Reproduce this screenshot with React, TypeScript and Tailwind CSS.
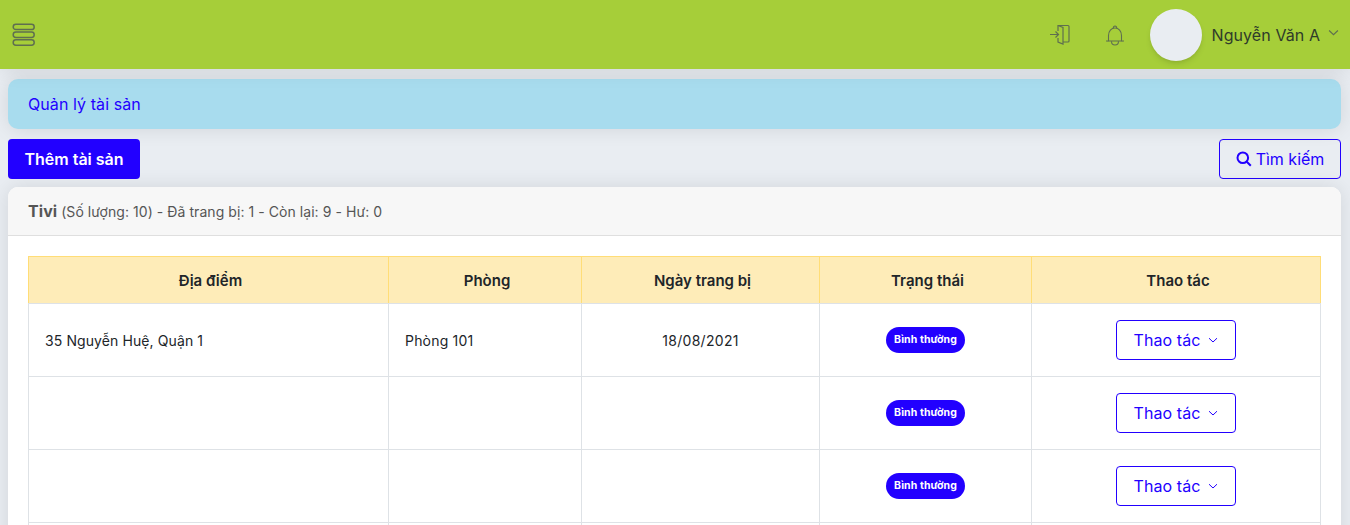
import React from "react";

const F = "[font-family:Inter,'Noto_Sans',sans-serif]";

function Row({ place, room, date }: { place?: string; room?: string; date?: string }) {
  return (
    <tr className="h-[73px]">
      <td className="border border-[#dee2e6] px-4 text-[14px] tracking-[0.1px] text-[#212529]">{place}</td>
      <td className="border border-[#dee2e6] px-4 text-[14px] tracking-[0.2px] text-[#212529]">{room}</td>
      <td className="border border-[#dee2e6] px-4 text-center text-[14px] tracking-[0.3px] text-[#212529]">{date}</td>
      <td className="border border-[#dee2e6] px-4 text-center">
        <span className="relative -top-px inline-flex h-[26px] w-[79px] items-center justify-center rounded-full bg-[#2200ff] text-[10.5px] font-bold tracking-[0.1px] text-white">Bình thường</span>
      </td>
      <td className="border border-[#dee2e6] px-4 text-center">
        <button className="inline-flex h-10 w-[120px] items-center justify-center gap-2 rounded border border-[#2200ff] text-[16px] tracking-[0.08px] text-[#2200ff]">
          Thao tác
          <svg width="10" height="10" viewBox="0 0 10 10" fill="none" stroke="currentColor" strokeWidth="1"><path d="M1 3.200 5 7l4-3.800" /></svg>
        </button>
      </td>
    </tr>
  );
}

export default function App() {
  return (
    <div className={`h-[525px] w-full overflow-hidden bg-[#e9edf2] ${F}`}>
      <header className="relative z-10 flex h-[69px] items-center bg-[#a6ce39] pl-3 pr-[11px] shadow-[0_0_20px_rgba(0,0,0,0.1)]">
        <svg width="24" height="24" viewBox="0 0 24 24" fill="none" stroke="#5f6f4f" strokeWidth="1.500">
          <rect x="1.200" y="1.200" width="21" height="5.400" rx="2.700" />
          <rect x="1.200" y="9" width="21" height="5.400" rx="2.700" />
          <rect x="1.200" y="16.800" width="21" height="5.400" rx="2.700" />
        </svg>
        <div className="ml-auto flex items-center">
          <svg width="24" height="24" viewBox="0 0 24 24" fill="none" stroke="#5f6f4f" strokeWidth="1.200">
            <path d="M2 11.500h8.500M7.500 8.500l3 3-3 3" />
            <path d="M10 8V2.500h10a1 1 0 0 1 1 1V18a1 1 0 0 1-1 1h-5" />
            <path d="M10 15v4l5 2V4.500l-5-2" />
          </svg>
          <svg className="ml-[32px]" width="22" height="22" viewBox="0 0 22 22" fill="none" stroke="#5f6f4f" strokeWidth="1.100">
            <path d="M9.300 4.200C9.300 3 10 2 11 2s1.700 1 1.700 2.200" />
            <path d="M4.500 17v-5.500C4.500 7 7.300 4 11 4s6.500 3 6.500 7.500V17c0 .3 1.500 0 2.500 0H2c1 0 2.500.3 2.500 0Z" />
            <path d="M7.500 17.200c0 2.200 1.500 3.800 3.500 3.800s3.500-1.600 3.500-3.800" />
          </svg>
          <div className="ml-[24px] h-[52px] w-[52px] rounded-full bg-[#e9edf2] shadow-md" />
          <span className="ml-[10px] text-[16px] tracking-[0.08px] text-[#2f3b2a]">Nguyễn Văn A</span>
          <svg className="ml-[8px] mb-1" width="11" height="11" viewBox="0 0 10 10" fill="none" stroke="#5f6f4f" strokeWidth="1"><path d="M1 3.200 5 7l4-3.800" /></svg>
        </div>
      </header>
      <main className="flex flex-col px-2 pt-[10px] pr-[9px]">
        <div className="flex h-[50px] items-center rounded-[10px] bg-[#a8dcee] px-5 text-[16px] tracking-[0.08px] text-[#2200ff] shadow-[0_0_20px_rgba(0,0,0,0.1)]">Quản lý tài sản</div>
        <div className="mt-[10px] flex items-center justify-between">
          <button className="h-10 w-[132px] rounded bg-[#2200ff] text-[16px] font-semibold text-white">Thêm tài sản</button>
          <button className="flex h-10 w-[122px] items-center justify-center gap-1 rounded border border-[#2200ff] text-[16px] text-[#2200ff]">
            <svg width="16" height="16" viewBox="0 0 16 16" fill="none" stroke="currentColor" strokeWidth="2"><circle cx="6.800" cy="6.800" r="5.300" /><path d="m10.800 10.800 4 4" /></svg>
            Tìm kiếm
          </button>
        </div>
        <section className="mt-2 overflow-hidden rounded-[10px] bg-white shadow-[0_0_20px_rgba(0,0,0,0.1)]">
          <div className="flex h-[49px] items-center gap-1 border-b border-[#dfdfdf] bg-[#f7f7f7] px-5 text-[14px] tracking-[0.06px] text-[#555]">
            <b className="text-[16px] font-bold text-[#555]">Tivi</b>
            <span>(Số lượng: 10) - Đã trang bị: 1 - Còn lại: 9 - Hư: 0</span>
          </div>
          <div className="p-5">
            <table className="w-full table-fixed border-collapse">
              <colgroup>
                <col className="w-[360px]" />
                <col className="w-[193px]" />
                <col className="w-[238px]" />
                <col className="w-[212px]" />
                <col />
              </colgroup>
              <thead>
                <tr className="h-[47px] bg-[#feecb8]">
                  {["Địa điểm", "Phòng", "Ngày trang bị", "Trạng thái", "Thao tác"].map((h) => (
                    <th key={h} className="border border-x-[#ffdd77] border-t-[#ffdd77] border-b-[#dee2e6] pl-1 pt-[2px] text-[15px] font-semibold text-[#212529]">{h}</th>
                  ))}
                </tr>
              </thead>
              <tbody>
                <Row place="35 Nguyễn Huệ, Quận 1" room="Phòng 101" date="18/08/2021" />
                <Row />
                <Row />
                <Row />
              </tbody>
            </table>
          </div>
        </section>
      </main>
    </div>
  );
}
